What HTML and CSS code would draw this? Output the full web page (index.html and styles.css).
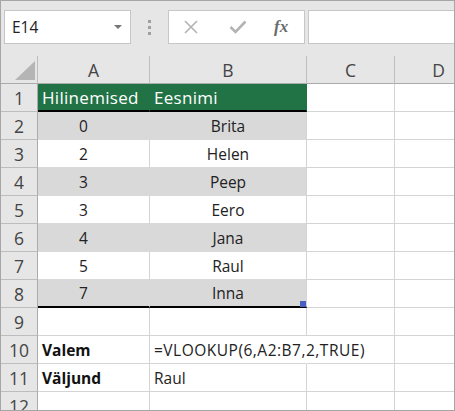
FILE: index.html
```html
<!DOCTYPE html>
<html lang="et">

<head>
    <meta charset="UTF-8">
    <meta name="viewport" content="width=device-width, initial-scale=1.0">
    <title>VLOOKUP</title>
    <link rel="stylesheet" href="styles.css">
</head>

<body>
    <div class="window">
        <div class="toolbar">
            <div class="name-box">
                <span>E14</span>
                <span class="caret"></span>
            </div>
            <div class="grip"><i></i><i></i><i></i></div>
            <div class="fx-buttons">
                <svg class="icon" width="16" height="16" viewBox="0 0 16 16">
                    <path d="M2 2 L14 14 M14 2 L2 14" stroke="#b3b3b3" stroke-width="1.6" fill="none" />
                </svg>
                <svg class="icon" width="18" height="16" viewBox="0 0 18 16">
                    <path d="M1.5 8 L6.5 13 L16.5 2.5" stroke="#b3b3b3" stroke-width="2.6" fill="none" />
                </svg>
                <span class="fx">fx</span>
            </div>
            <div class="formula-input"></div>
        </div>

        <div class="sheet">
            <!-- column headers -->
            <div class="cell corner"><span class="corner-mark"></span></div>
            <div class="cell col-head">A</div>
            <div class="cell col-head">B</div>
            <div class="cell col-head">C</div>
            <div class="cell col-head">D</div>

            <!-- 1 -->
            <div class="cell row-head">1</div>
            <div class="cell head-fill left">Hilinemised</div>
            <div class="cell head-fill left">Eesnimi</div>
            <div class="cell"></div>
            <div class="cell"></div>

            <!-- 2 -->
            <div class="cell row-head">2</div>
            <div class="cell band num">0</div>
            <div class="cell band name">Brita</div>
            <div class="cell"></div>
            <div class="cell"></div>

            <!-- 3 -->
            <div class="cell row-head">3</div>
            <div class="cell plain num">2</div>
            <div class="cell plain name">Helen</div>
            <div class="cell"></div>
            <div class="cell"></div>

            <!-- 4 -->
            <div class="cell row-head">4</div>
            <div class="cell band num">3</div>
            <div class="cell band name">Peep</div>
            <div class="cell"></div>
            <div class="cell"></div>

            <!-- 5 -->
            <div class="cell row-head">5</div>
            <div class="cell plain num">3</div>
            <div class="cell plain name">Eero</div>
            <div class="cell"></div>
            <div class="cell"></div>

            <!-- 6 -->
            <div class="cell row-head">6</div>
            <div class="cell band num">4</div>
            <div class="cell band name">Jana</div>
            <div class="cell"></div>
            <div class="cell"></div>

            <!-- 7 -->
            <div class="cell row-head">7</div>
            <div class="cell plain num">5</div>
            <div class="cell plain name">Raul</div>
            <div class="cell"></div>
            <div class="cell"></div>

            <!-- 8 -->
            <div class="cell row-head">8</div>
            <div class="cell band num last">7</div>
            <div class="cell band name last">Inna<span class="fill-handle"></span></div>
            <div class="cell"></div>
            <div class="cell"></div>

            <!-- 9 -->
            <div class="cell row-head">9</div>
            <div class="cell"></div>
            <div class="cell"></div>
            <div class="cell"></div>
            <div class="cell"></div>

            <!-- 10 -->
            <div class="cell row-head">10</div>
            <div class="cell left bold">Valem</div>
            <div class="cell left overflow formula">=VLOOKUP(6,A2:B7,2,TRUE)</div>
            <div class="cell"></div>
            <div class="cell"></div>

            <!-- 11 -->
            <div class="cell row-head">11</div>
            <div class="cell left bold">Väljund</div>
            <div class="cell left">Raul</div>
            <div class="cell"></div>
            <div class="cell"></div>

            <!-- 12 -->
            <div class="cell row-head">12</div>
            <div class="cell"></div>
            <div class="cell"></div>
            <div class="cell"></div>
            <div class="cell"></div>
        </div>
    </div>
</body>

</html>
```

FILE: styles.css
```css
* {
    box-sizing: border-box;
}

body {
    margin: 0;
    font-family: "Open Sans", "Noto Sans", sans-serif;
}

.window {
    width: 455px;
    height: 411px;
    border: 1px solid #a6a6a6;
    background-color: #e6e6e6;
    overflow: hidden;
}

/* formula bar */
.toolbar {
    display: flex;
    align-items: flex-start;
    height: 55px;
    padding: 9px 0 0 3px;
}

.name-box {
    width: 127px;
    height: 34px;
    background-color: white;
    border: 1px solid #c6c6c6;
    display: flex;
    align-items: center;
    justify-content: space-between;
    padding: 0 8px 0 7px;
    font-size: 15.5px;
    color: #222;
}

.caret {
    width: 0;
    height: 0;
    border-left: 4px solid transparent;
    border-right: 4px solid transparent;
    border-top: 4px solid #777;
}

.grip {
    width: 37px;
    height: 34px;
    display: flex;
    flex-direction: column;
    align-items: center;
    justify-content: center;
    gap: 3px;
}

.grip i {
    width: 3px;
    height: 3px;
    background-color: #a0a0a0;
}

.fx-buttons {
    width: 137px;
    height: 34px;
    background-color: white;
    border: 1px solid #c6c6c6;
    display: flex;
    align-items: center;
    padding-left: 14px;
    gap: 30px;
}

.icon {
    display: block;
}

.fx {
    font-family: "Liberation Serif", serif;
    font-style: italic;
    font-weight: bold;
    font-size: 17px;
    color: #6b6b6b;
    margin-left: -3px;
}

.formula-input {
    flex: 1;
    height: 34px;
    margin-left: 3px;
    background-color: white;
    border: 1px solid #c6c6c6;
    border-right: none;
}

/* grid */
.sheet {
    display: grid;
    grid-template-columns: 37px 112px 157px 88px 88px;
    grid-auto-rows: 28px;
    background-color: white;
}

.cell {
    position: relative;
    border-right: 1px solid #d4d4d4;
    border-bottom: 1px solid #d4d4d4;
    display: flex;
    align-items: center;
    justify-content: center;
    font-size: 15.5px;
    color: #222;
    white-space: nowrap;
}

.corner,
.col-head,
.row-head {
    background-color: #e6e6e6;
    border-color: #bdbdbd;
    color: #444;
    font-size: 17.5px;
}

.col-head {
    border-bottom-color: #ababab;
    padding-top: 1px;
}

.corner {
    border-bottom-color: #ababab;
}

.row-head {
    border-right-color: #ababab;
    padding-top: 1px;
}

.corner-mark {
    position: absolute;
    right: 2px;
    bottom: 3px;
    width: 0;
    height: 0;
    border-left: 20px solid transparent;
    border-bottom: 19px solid #b5b5b5;
}

.left {
    justify-content: flex-start;
    padding-left: 4px;
}

.bold {
    font-weight: bold;
    color: #111;
}

.overflow {
    overflow: visible;
    z-index: 1;
    border-right-color: transparent;
}

.formula {
    letter-spacing: 0.5px;
}

.head-fill {
    background-color: #217346;
    border-right-color: #217346;
    border-bottom: 2px solid #000;
    color: white;
    font-size: 17px;
    letter-spacing: 0.3px;
}

.band {
    background-color: #d9d9d9;
    border-right-color: #d9d9d9;
    border-bottom-color: #d9d9d9;
}

.plain {
    border-bottom-color: #d9d9d9;
}

.plain.name,
.band.name {
    border-right-color: #d4d4d4;
}

.num {
    padding-right: 20px;
}

.last {
    border-bottom: 2px solid #000;
}

.fill-handle {
    position: absolute;
    right: 0;
    top: 21px;
    width: 6px;
    height: 6px;
    background-color: #4b5fc0;
}
```
